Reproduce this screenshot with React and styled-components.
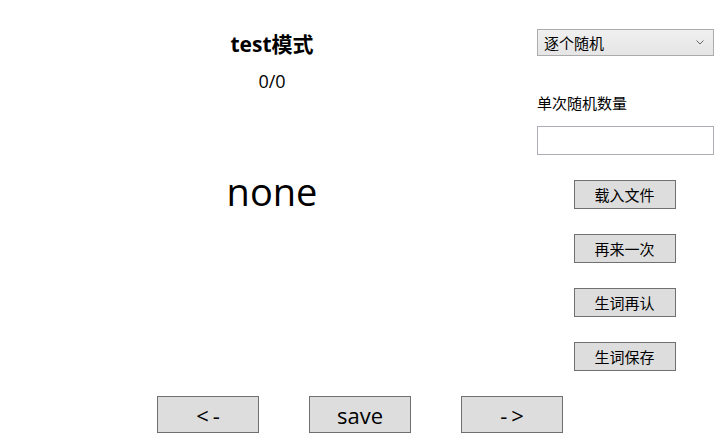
import styled, { createGlobalStyle } from 'styled-components';

const GlobalStyle = createGlobalStyle`
  body {
    margin: 0;
    background: #fff;
    font-family: "Open Sans", "Noto Sans CJK SC", sans-serif;
    color: #000;
  }
`;

const Page = styled.div`
  width: 716px;
  height: 441px;
  display: flex;
  flex-direction: column;
`;

const Top = styled.div`
  display: flex;
`;

const Main = styled.div`
  width: 530px;
  padding-left: 7px;
  padding-top: 29px;
  display: flex;
  flex-direction: column;
  align-items: center;
`;

const Title = styled.div`
  font-size: 21px;
  font-weight: 700;
  line-height: 30px;
`;

const Counter = styled.div`
  margin-top: 10px;
  font-size: 18px;
  line-height: 24px;
`;

const Word = styled.div`
  margin-top: 73px;
  font-size: 38px;
  line-height: 50px;
`;

const Side = styled.div`
  width: 177px;
  padding-top: 29px;
  display: flex;
  flex-direction: column;
  align-items: center;
`;

const Select = styled.select`
  width: 177px;
  height: 27px;
  box-sizing: border-box;
  border: 1px solid #acacac;
  font-family: inherit;
  font-size: 15px;
  padding: 0 6px;
  appearance: none;
  background-image: url("data:image/svg+xml,%3Csvg xmlns='http://www.w3.org/2000/svg' width='8' height='5'%3E%3Cpath d='M0.5 0.5 L4 4 L7.5 0.5' fill='none' stroke='%23666' stroke-width='1'/%3E%3C/svg%3E"), linear-gradient(#f0f0f0, #e5e5e5);
  background-repeat: no-repeat;
  background-position: right 9px center, 0 0;
  color: #000;
`;

const Label = styled.div`
  align-self: stretch;
  margin-top: 37px;
  font-size: 15px;
  line-height: 20px;
`;

const Input = styled.input`
  margin-top: 13px;
  width: 177px;
  height: 29px;
  box-sizing: border-box;
  border: 1px solid #abadb3;
`;

const SideButton = styled.button`
  margin-top: 25px;
  margin-right: 2px;
  width: 102px;
  height: 29px;
  box-sizing: border-box;
  background: #dddddd;
  border: 1px solid #707070;
  font-family: inherit;
  font-size: 15px;
  color: #000;
  padding: 0;
`;

const Bottom = styled.div`
  margin-top: 25px;
  padding-left: 4px;
  display: flex;
  justify-content: center;
  gap: 50px;
`;

const NavButton = styled.button`
  width: 102px;
  height: 37px;
  box-sizing: border-box;
  background: #dddddd;
  border: 1px solid #707070;
  font-family: inherit;
  font-size: 22px;
  letter-spacing: ${(p) => (p.$spaced ? '4px' : '0')};
  text-indent: ${(p) => (p.$spaced ? '4px' : '0')};
  color: #000;
  padding: 0;
`;

export default function App() {
  return (
    <Page>
      <GlobalStyle />
      <Top>
        <Main>
          <Title>test模式</Title>
          <Counter>0/0</Counter>
          <Word>none</Word>
        </Main>
        <Side>
          <Select defaultValue="逐个随机">
            <option>逐个随机</option>
          </Select>
          <Label>单次随机数量</Label>
          <Input type="text" />
          <SideButton>载入文件</SideButton>
          <SideButton>再来一次</SideButton>
          <SideButton>生词再认</SideButton>
          <SideButton>生词保存</SideButton>
        </Side>
      </Top>
      <Bottom>
        <NavButton $spaced>&lt;-</NavButton>
        <NavButton>save</NavButton>
        <NavButton $spaced>-&gt;</NavButton>
      </Bottom>
    </Page>
  );
}
